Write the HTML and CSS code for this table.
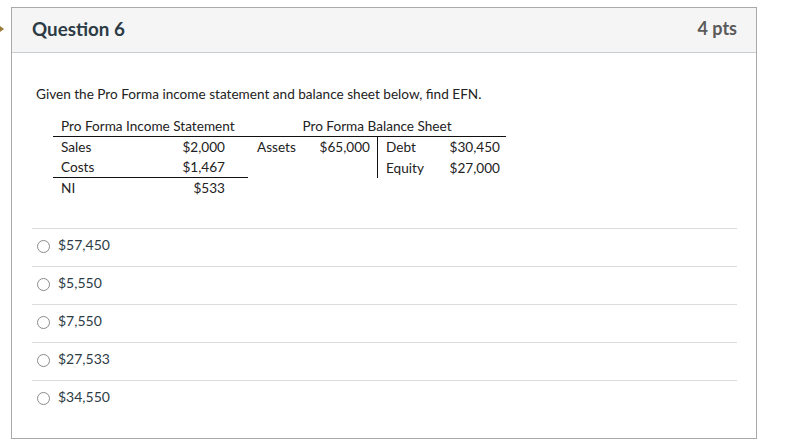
FILE: index.html
```html
<!DOCTYPE html>
<html>
<head>
<meta charset="utf-8">
<link rel="stylesheet" href="styles.css">
</head>
<body>
<div class="page">
  <div class="marker"><span class="arrow"></span></div>
  <div class="card">
    <div class="header">
      <span class="title">Question 6</span>
      <span class="pts">4 pts</span>
    </div>
    <div class="body">
      <p class="question">Given the Pro Forma income statement and balance sheet below, find EFN.</p>
      <div class="fin">
        <div class="cell head head-left">Pro Forma Income Statement</div>
        <div class="cell head head-right">Pro Forma Balance Sheet</div>

        <div class="cell lbl">Sales</div>
        <div class="cell num">$2,000</div>
        <div class="cell lbl2">Assets</div>
        <div class="cell num2">$65,000</div>
        <div class="cell lbl3 vline">Debt</div>
        <div class="cell num3">$30,450</div>

        <div class="cell lbl uline">Costs</div>
        <div class="cell num uline">$1,467</div>
        <div class="cell lbl2"></div>
        <div class="cell num2"></div>
        <div class="cell lbl3 vline">Equity</div>
        <div class="cell num3">$27,000</div>

        <div class="cell lbl">NI</div>
        <div class="cell num">$533</div>
      </div>
      <div class="answers">
        <label class="answer"><span class="radio"></span><span class="atext">$57,450</span></label>
        <label class="answer"><span class="radio"></span><span class="atext">$5,550</span></label>
        <label class="answer"><span class="radio"></span><span class="atext">$7,550</span></label>
        <label class="answer"><span class="radio"></span><span class="atext">$27,533</span></label>
        <label class="answer"><span class="radio"></span><span class="atext">$34,550</span></label>
      </div>
    </div>
  </div>
</div>
</body>
</html>
```
FILE: styles.css
```css
html, body {
  margin: 0;
  padding: 0;
  background: #ffffff;
}
body {
  font-family: Lato, "Open Sans", sans-serif;
  color: #2d3b45;
}
.page {
  display: flex;
  padding-top: 7px;
}
.marker {
  width: 11px;
  flex: none;
  display: flex;
  justify-content: flex-start;
  padding-top: 19px;
  box-sizing: border-box;
}
.arrow {
  width: 0;
  height: 0;
  border-top: 3px solid transparent;
  border-bottom: 3px solid transparent;
  border-left: 4px solid #9a7a36;
}
.card {
  width: 746px;
  height: 432px;
  box-sizing: border-box;
  border: 1px solid #a9a9a9;
  display: flex;
  flex-direction: column;
}
.header {
  height: 45px;
  box-sizing: border-box;
  background: #f5f5f5;
  border-bottom: 1px solid #c7cdd1;
  display: flex;
  align-items: center;
  justify-content: space-between;
  padding: 0 19px 4px 20px;
}
.title {
  font-weight: 700;
  font-size: 18.8px;
  color: #2d3b45;
}
.pts {
  font-weight: 700;
  font-size: 18px;
  color: #5a5a5a;
}
.body {
  padding: 0 19px 0 20px;
}
.question {
  margin: 33px 0 0 4px;
  font-size: 13.6px;
  line-height: 16px;
  color: #222;
}
.fin {
  margin: 16px 0 0 21px;
  display: grid;
  grid-template-columns: 87px 108px 64px 65px 63px 66px;
  grid-template-rows: 19px 20px 21px 20px;
  font-size: 13.6px;
  color: #222;
  width: 453px;
}
.cell {
  display: flex;
  align-items: center;
  white-space: nowrap;
}
.head {
  border-bottom: 1px solid #111;
  padding-bottom: 2px;
}
.head-left {
  grid-column: 1 / 3;
  padding-left: 8px;
}
.head-right {
  grid-column: 3 / 7;
  justify-content: center;
}
.lbl {
  padding-left: 8px;
}
.num {
  justify-content: flex-end;
  padding-right: 23px;
}
.lbl2 {
  padding-left: 9px;
}
.num2 {
  justify-content: flex-end;
  padding-right: 7px;
}
.lbl3 {
  padding-left: 8px;
}
.num3 {
  justify-content: flex-end;
  padding-right: 6px;
}
.vline {
  border-left: 1px solid #111;
}
.uline {
  border-bottom: 1px solid #111;
}
.answers {
  margin-top: 30px;
  display: flex;
  flex-direction: column;
}
.answer {
  height: 38px;
  box-sizing: border-box;
  border-top: 1px solid #dcdcdc;
  display: flex;
  align-items: center;
  padding: 0 0 5px 5px;
  font-size: 14px;
  color: #2d3b45;
}
.radio {
  width: 13px;
  height: 13px;
  box-sizing: border-box;
  border: 1px solid #8a8a8a;
  border-radius: 50%;
  margin-top: 3px;
  margin-right: 8px;
  flex: none;
}
.atext {
  line-height: 16px;
}
```
